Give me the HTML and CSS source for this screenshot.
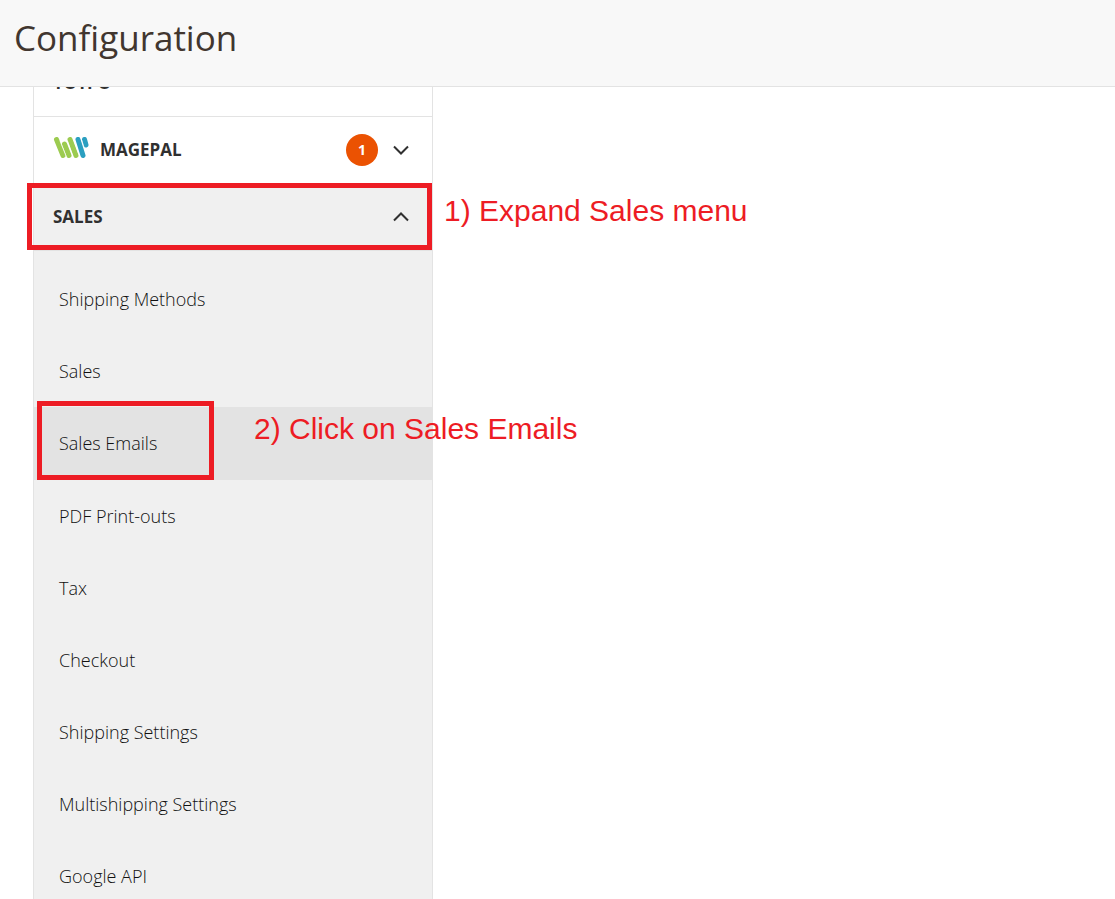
FILE: index.html
```html
<!DOCTYPE html>
<html lang="en">
<head>
    <meta charset="UTF-8">
    <meta name="viewport" content="width=device-width, initial-scale=1.0">
    <title>Configuration</title>
    <link rel="stylesheet" href="styles.css">
</head>
<body>
    <header class="page-header">
        <h1 class="page-title">Configuration</h1>
    </header>
    <main class="page-content">
        <nav class="config-nav">
            <button type="button" class="nav-title">
                <span class="nav-label">YOTPO</span>
            </button>
            <button type="button" class="nav-title">
                <svg class="logo" width="36" height="22" viewBox="0 0 36 22" fill="none" stroke-width="5" stroke-linecap="round">
                    <path stroke="#9ccb50" d="M3.5 2.5L10 18.5M11.5 7L16 18.5M17 2.5L23 18.5"/>
                    <path stroke="#2b9fc0" d="M25 2.5L30 18.5M31.5 2.5L33 8"/>
                    <path stroke="#fff" stroke-width="1" stroke-opacity=".6" d="M7 4L13 19M14.5 4L19.5 18.5M20.5 2L26.5 19M28 1L32 13"/>
                </svg>
                <span class="nav-label">MAGEPAL</span>
                <span class="badge">1</span>
                <svg class="chevron" width="16" height="10" viewBox="0 0 16 10">
                    <path d="M1 1.5L8 8.5L15 1.5"/>
                </svg>
            </button>
            <button type="button" class="nav-title open" aria-expanded="true">
                <span class="nav-label">SALES</span>
                <svg class="chevron" width="16" height="10" viewBox="0 0 16 10">
                    <path d="M1 8.5L8 1.5L15 8.5"/>
                </svg>
                <span class="marker marker-title"></span>
                <span class="note note-title">1) Expand Sales menu</span>
            </button>
            <ul class="nav-items">
                <li><a href="#">Shipping Methods</a></li>
                <li><a href="#">Sales</a></li>
                <li class="active">
                    <a href="#">Sales Emails</a>
                    <span class="marker marker-item"></span>
                    <span class="note note-item">2) Click on Sales Emails</span>
                </li>
                <li><a href="#">PDF Print-outs</a></li>
                <li><a href="#">Tax</a></li>
                <li><a href="#">Checkout</a></li>
                <li><a href="#">Shipping Settings</a></li>
                <li><a href="#">Multishipping Settings</a></li>
                <li><a href="#">Google API</a></li>
            </ul>
        </nav>
    </main>
</body>
</html>
```
FILE: styles.css
```css
* {
    box-sizing: border-box;
}
body {
    margin: 0;
    height: 100vh;
    display: flex;
    flex-direction: column;
    overflow: hidden;
    font-family: "Open Sans", sans-serif;
    font-size: 18px;
    color: #303030;
    background-color: #fff;
}
.page-header {
    flex: none;
    padding: 13px 14px 23px;
    background-color: #f8f8f8;
    border-bottom: 1px solid #e3e3e3;
}
.page-title {
    margin: 0;
    font-size: 35px;
    line-height: 50px;
    font-weight: 400;
    color: #41362f;
}
.page-content {
    flex: 1;
    min-height: 0;
    padding: 0 33px;
    overflow: hidden;
}
/* the list is scrolled, its first row is half under the header */
.config-nav {
    width: 400px;
    margin-top: -37px;
    border: 1px solid #e3e3e3;
    border-top: none;
}
.nav-title {
    position: relative;
    display: flex;
    align-items: center;
    width: 100%;
    height: 67px;
    padding: 0 23px 0 19px;
    border: none;
    border-bottom: 1px solid #e3e3e3;
    background-color: #fff;
    font: 700 17px/24px "Open Sans", sans-serif;
    color: #303030;
    text-align: left;
}
.nav-title.open {
    background-color: #f0f0f0;
}
.nav-label {
    flex: 1;
}
.logo {
    margin: 0 11px 4px 0;
}
.badge {
    width: 32px;
    height: 32px;
    margin-right: 15px;
    border-radius: 50%;
    background-color: #eb5202;
    color: #fff;
    font-size: 14px;
    font-weight: 700;
    line-height: 32px;
    text-align: center;
}
.chevron {
    fill: none;
    stroke: #303030;
    stroke-width: 2;
}
.nav-items {
    margin: 0;
    padding: 12px 0;
    list-style: none;
    background-color: #f0f0f0;
}
.nav-items li {
    position: relative;
}
.nav-items a {
    display: block;
    padding: 24px 25px;
    line-height: 24px;
    font-weight: 300;
    color: #111;
    text-decoration: none;
}
.nav-items .active {
    background-color: #e3e3e3;
    border-bottom: 1px solid #e3e3e3;
}
/* tutorial callouts */
.marker {
    position: absolute;
    border: 5px solid #ed1c24;
}
.marker-title {
    inset: -1px 0 0 -7px;
}
.marker-item {
    top: -6px;
    left: 3px;
    width: 177px;
    height: 79px;
}
.note {
    position: absolute;
    font-family: "Liberation Sans", Arial, sans-serif;
    font-size: 30px;
    font-weight: 400;
    line-height: 36px;
    color: #ed1c24;
    white-space: nowrap;
}
.note-title {
    top: 9px;
    left: 410px;
}
.note-item {
    top: 4px;
    left: 220px;
}
```
